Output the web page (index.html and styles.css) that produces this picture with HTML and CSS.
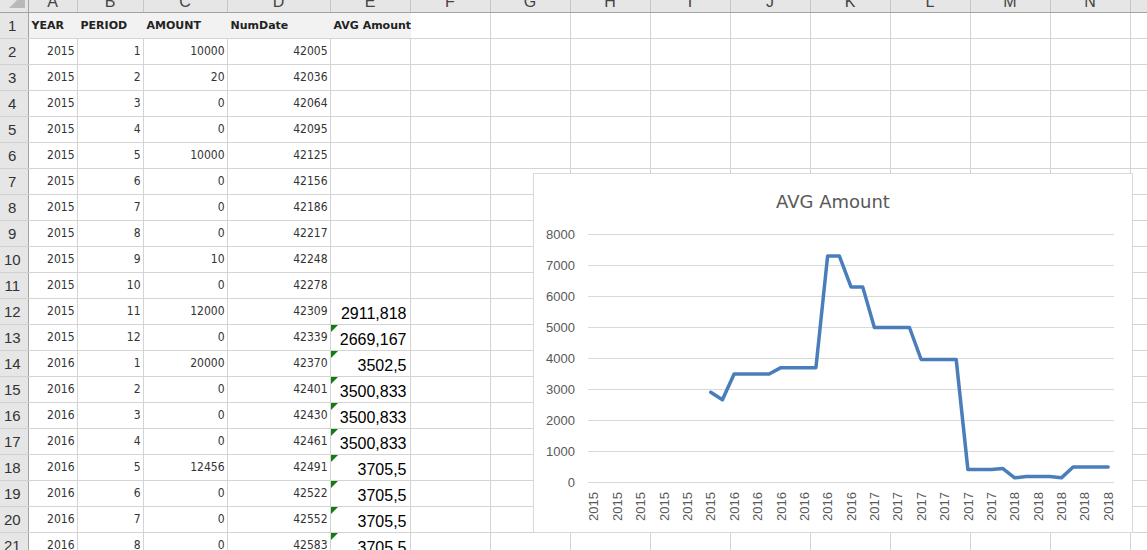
FILE: index.html
```html
<!DOCTYPE html>
<html lang="en-us">
  <head>
    <meta charset="utf-8" />
    <meta name="viewport" content="width=device-width, initial-scale=1" />
    <title>AVG Amount</title>
    <link rel="stylesheet" href="styles.css">
  </head>
  <body>
    <div class="sheet">
      <table class="grid">
        <colgroup>
          <col class="c-head" />
          <col class="c-a" />
          <col class="c-b" />
          <col class="c-c" />
          <col class="c-d" />
          <col class="c-e" />
          <col span="10" class="c-x" />
        </colgroup>
        <thead>
          <tr>
            <th class="corner"></th>
            <th>A</th><th>B</th><th>C</th><th>D</th><th>E</th><th>F</th><th>G</th>
            <th>H</th><th>I</th><th>J</th><th>K</th><th>L</th><th>M</th><th>N</th><th>O</th>
          </tr>
        </thead>
        <tbody>
          <tr class="titles">
            <th>1</th>
            <td class="head">YEAR</td><td class="head">PERIOD</td><td class="head">AMOUNT</td>
            <td class="head">NumDate</td><td class="head">AVG Amount</td>
            <td></td><td></td><td></td><td></td><td></td><td></td><td></td><td></td><td></td><td></td>
          </tr>
          <tr><th>2</th><td>2015</td><td>1</td><td>10000</td><td>42005</td><td class="avg"></td><td></td><td></td><td></td><td></td><td></td><td></td><td></td><td></td><td></td><td></td></tr>
          <tr><th>3</th><td>2015</td><td>2</td><td>20</td><td>42036</td><td class="avg"></td><td></td><td></td><td></td><td></td><td></td><td></td><td></td><td></td><td></td><td></td></tr>
          <tr><th>4</th><td>2015</td><td>3</td><td>0</td><td>42064</td><td class="avg"></td><td></td><td></td><td></td><td></td><td></td><td></td><td></td><td></td><td></td><td></td></tr>
          <tr><th>5</th><td>2015</td><td>4</td><td>0</td><td>42095</td><td class="avg"></td><td></td><td></td><td></td><td></td><td></td><td></td><td></td><td></td><td></td><td></td></tr>
          <tr><th>6</th><td>2015</td><td>5</td><td>10000</td><td>42125</td><td class="avg"></td><td></td><td></td><td></td><td></td><td></td><td></td><td></td><td></td><td></td><td></td></tr>
          <tr><th>7</th><td>2015</td><td>6</td><td>0</td><td>42156</td><td class="avg"></td><td></td><td></td><td></td><td></td><td></td><td></td><td></td><td></td><td></td><td></td></tr>
          <tr><th>8</th><td>2015</td><td>7</td><td>0</td><td>42186</td><td class="avg"></td><td></td><td></td><td></td><td></td><td></td><td></td><td></td><td></td><td></td><td></td></tr>
          <tr><th>9</th><td>2015</td><td>8</td><td>0</td><td>42217</td><td class="avg"></td><td></td><td></td><td></td><td></td><td></td><td></td><td></td><td></td><td></td><td></td></tr>
          <tr><th>10</th><td>2015</td><td>9</td><td>10</td><td>42248</td><td class="avg"></td><td></td><td></td><td></td><td></td><td></td><td></td><td></td><td></td><td></td><td></td></tr>
          <tr><th>11</th><td>2015</td><td>10</td><td>0</td><td>42278</td><td class="avg"></td><td></td><td></td><td></td><td></td><td></td><td></td><td></td><td></td><td></td><td></td></tr>
          <tr><th>12</th><td>2015</td><td>11</td><td>12000</td><td>42309</td><td class="avg">2911,818</td><td></td><td></td><td></td><td></td><td></td><td></td><td></td><td></td><td></td><td></td></tr>
          <tr><th>13</th><td>2015</td><td>12</td><td>0</td><td>42339</td><td class="avg flag">2669,167</td><td></td><td></td><td></td><td></td><td></td><td></td><td></td><td></td><td></td><td></td></tr>
          <tr><th>14</th><td>2016</td><td>1</td><td>20000</td><td>42370</td><td class="avg flag">3502,5</td><td></td><td></td><td></td><td></td><td></td><td></td><td></td><td></td><td></td><td></td></tr>
          <tr><th>15</th><td>2016</td><td>2</td><td>0</td><td>42401</td><td class="avg flag">3500,833</td><td></td><td></td><td></td><td></td><td></td><td></td><td></td><td></td><td></td><td></td></tr>
          <tr><th>16</th><td>2016</td><td>3</td><td>0</td><td>42430</td><td class="avg flag">3500,833</td><td></td><td></td><td></td><td></td><td></td><td></td><td></td><td></td><td></td><td></td></tr>
          <tr><th>17</th><td>2016</td><td>4</td><td>0</td><td>42461</td><td class="avg flag">3500,833</td><td></td><td></td><td></td><td></td><td></td><td></td><td></td><td></td><td></td><td></td></tr>
          <tr><th>18</th><td>2016</td><td>5</td><td>12456</td><td>42491</td><td class="avg flag">3705,5</td><td></td><td></td><td></td><td></td><td></td><td></td><td></td><td></td><td></td><td></td></tr>
          <tr><th>19</th><td>2016</td><td>6</td><td>0</td><td>42522</td><td class="avg flag">3705,5</td><td></td><td></td><td></td><td></td><td></td><td></td><td></td><td></td><td></td><td></td></tr>
          <tr><th>20</th><td>2016</td><td>7</td><td>0</td><td>42552</td><td class="avg flag">3705,5</td><td></td><td></td><td></td><td></td><td></td><td></td><td></td><td></td><td></td><td></td></tr>
          <tr><th>21</th><td>2016</td><td>8</td><td>0</td><td>42583</td><td class="avg flag">3705,5</td><td></td><td></td><td></td><td></td><td></td><td></td><td></td><td></td><td></td><td></td></tr>
        </tbody>
      </table>

      <div class="chart">
        <svg width="600" height="360" viewBox="0 0 600 360">
          <rect class="frame" x="0.5" y="0.5" width="599" height="359" />
          <text class="chart-title" x="300" y="35" text-anchor="middle">AVG Amount</text>
          <g class="gridlines">
            <line x1="55" x2="581" y1="309.5" y2="309.5" />
            <line x1="55" x2="581" y1="278.5" y2="278.5" />
            <line x1="55" x2="581" y1="247.5" y2="247.5" />
            <line x1="55" x2="581" y1="216.5" y2="216.5" />
            <line x1="55" x2="581" y1="185.5" y2="185.5" />
            <line x1="55" x2="581" y1="154.5" y2="154.5" />
            <line x1="55" x2="581" y1="123.5" y2="123.5" />
            <line x1="55" x2="581" y1="92.5" y2="92.5" />
            <line x1="55" x2="581" y1="61.5" y2="61.5" />
          </g>
          <g class="axis" text-anchor="end">
            <text x="42" y="66">8000</text>
            <text x="42" y="97">7000</text>
            <text x="42" y="128">6000</text>
            <text x="42" y="159">5000</text>
            <text x="42" y="190">4000</text>
            <text x="42" y="221">3000</text>
            <text x="42" y="252">2000</text>
            <text x="42" y="283">1000</text>
            <text x="42" y="314">0</text>
          </g>
          <g class="axis" text-anchor="end">
            <text transform="translate(65.4 319) rotate(-90)">2015</text>
            <text transform="translate(88.8 319) rotate(-90)">2015</text>
            <text transform="translate(112.2 319) rotate(-90)">2015</text>
            <text transform="translate(135.6 319) rotate(-90)">2015</text>
            <text transform="translate(158.9 319) rotate(-90)">2015</text>
            <text transform="translate(182.3 319) rotate(-90)">2015</text>
            <text transform="translate(205.7 319) rotate(-90)">2016</text>
            <text transform="translate(229.1 319) rotate(-90)">2016</text>
            <text transform="translate(252.5 319) rotate(-90)">2016</text>
            <text transform="translate(275.8 319) rotate(-90)">2016</text>
            <text transform="translate(299.2 319) rotate(-90)">2016</text>
            <text transform="translate(322.6 319) rotate(-90)">2016</text>
            <text transform="translate(346.0 319) rotate(-90)">2017</text>
            <text transform="translate(369.3 319) rotate(-90)">2017</text>
            <text transform="translate(392.7 319) rotate(-90)">2017</text>
            <text transform="translate(416.1 319) rotate(-90)">2017</text>
            <text transform="translate(439.5 319) rotate(-90)">2017</text>
            <text transform="translate(462.9 319) rotate(-90)">2017</text>
            <text transform="translate(486.2 319) rotate(-90)">2018</text>
            <text transform="translate(509.6 319) rotate(-90)">2018</text>
            <text transform="translate(533.0 319) rotate(-90)">2018</text>
            <text transform="translate(556.4 319) rotate(-90)">2018</text>
            <text transform="translate(579.8 319) rotate(-90)">2018</text>
          </g>
          <!-- x: category index + 0.5, y: value -->
          <g transform="translate(55 309.5) scale(11.6889 -0.031)">
            <polyline
              class="series"
              points="10.5,2911.8 11.5,2669.2 12.5,3502.5 13.5,3500.8 14.5,3500.8 15.5,3500.8 16.5,3705.5 17.5,3705.5 18.5,3705.5 19.5,3705.5 20.5,7310 21.5,7310 22.5,6310 23.5,6310 24.5,5000 25.5,5000 26.5,5000 27.5,5000 28.5,3968 29.5,3968 30.5,3968 31.5,3968 32.5,419 33.5,419 34.5,419 35.5,450 36.5,150 37.5,190 38.5,190 39.5,190 40.5,150 41.5,503 42.5,503 43.5,503 44.5,503"
            />
          </g>
        </svg>
      </div>
    </div>
  </body>
</html>
```

FILE: styles.css
```css
html,
body {
  margin: 0;
}

body {
  background-color: #fff;
  height: 550px;
  overflow: hidden;
  font-family: "DejaVu Sans Condensed", "DejaVu Sans", sans-serif;
}

.sheet {
  position: relative;
  margin-top: -8px;
}

.grid {
  border-collapse: collapse;
  table-layout: fixed;
  width: 1210px;
}

.c-head {
  width: 28px;
}
.c-a {
  width: 49px;
}
.c-b {
  width: 66px;
}
.c-c {
  width: 84px;
}
.c-d {
  width: 103px;
}
.c-e {
  width: 80px;
}
.c-x {
  width: 80px;
}

/* column letters */
.grid thead tr {
  height: 20px;
}

.grid thead th {
  background-color: #e6e6e6;
  border-right: 1px solid #c6c6c6;
  border-bottom: 1px solid #a3a3a3;
  padding: 0;
  font: 16px "Liberation Sans", sans-serif;
  color: #444;
  font-weight: normal;
  text-align: center;
}

.grid thead th.corner {
  position: relative;
  border-right-color: #a3a3a3;
}

.corner::after {
  content: "";
  position: absolute;
  right: 3px;
  bottom: 4px;
  border-left: 16px solid transparent;
  border-bottom: 16px solid #b9b9b9;
}

/* rows */
.grid tbody tr {
  height: 26px;
}

.grid tbody th {
  background-color: #e6e6e6;
  border-right: 1px solid #a3a3a3;
  border-bottom: 1px solid #d0d0d0;
  padding: 0 3px 0 0;
  font: 15px "Liberation Sans", sans-serif;
  color: #333;
  font-weight: normal;
  text-align: center;
}

.grid td {
  border: 1px solid #d4d4d4;
  padding: 0 2px;
  font-size: 12px;
  color: #333;
  text-align: right;
  white-space: nowrap;
}

.titles td.head {
  background-color: #f2f2f2;
  border-right-color: #f2f2f2;
  padding-left: 3px;
  font: bold 11px "DejaVu Sans", sans-serif;
  color: #222;
  text-align: left;
}

.grid td.avg {
  position: relative;
  padding: 0 3px 1px 0;
  vertical-align: bottom;
  font: 16px/18px "Liberation Sans", sans-serif;
  color: #000;
}

.flag::before {
  content: "";
  position: absolute;
  left: 0;
  top: 0;
  border-top: 7px solid #137b13;
  border-right: 7px solid transparent;
}

/* chart */
.chart {
  position: absolute;
  left: 533px;
  top: 181px;
  width: 600px;
  height: 360px;
}

.chart svg {
  display: block;
}

.frame {
  fill: #fff;
  stroke: #d9d9d9;
}

.chart-title {
  font: 18px "DejaVu Sans", sans-serif;
  fill: #595959;
}

.gridlines line {
  stroke: #d9d9d9;
  stroke-width: 1;
}

.axis {
  font: 13px "Liberation Sans", sans-serif;
  fill: #595959;
}

.series {
  fill: none;
  stroke: #4a7ebb;
  stroke-width: 3.5;
  stroke-linejoin: round;
  stroke-linecap: round;
  vector-effect: non-scaling-stroke;
}
```
